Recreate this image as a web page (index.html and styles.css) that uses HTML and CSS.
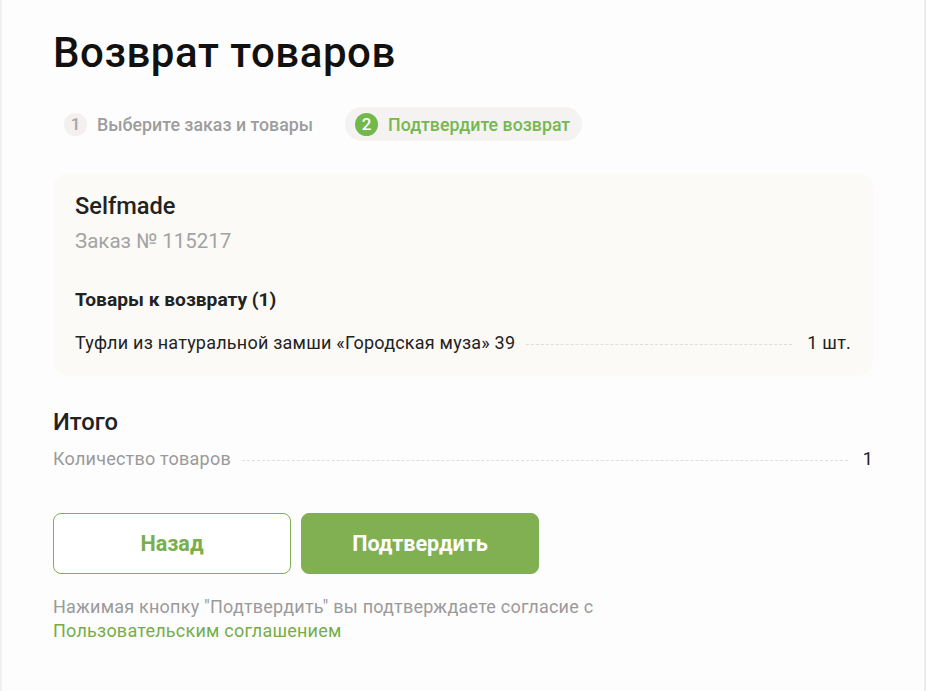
FILE: index.html
```html
<!DOCTYPE html>
<html lang="ru">
<head>
<meta charset="utf-8">
<title>Возврат товаров</title>
<link rel="stylesheet" href="styles.css">
</head>
<body>
<div class="modal">
  <h1 class="title">Возврат товаров</h1>
  <div class="steps">
    <div class="step"><span class="step-num">1</span><span class="step-label">Выберите заказ и товары</span></div>
    <div class="step step-active"><span class="step-num">2</span><span class="step-label">Подтвердите возврат</span></div>
  </div>
  <div class="card">
    <div class="shop">Selfmade</div>
    <div class="order">Заказ № 115217</div>
    <div class="items-title">Товары к возврату (1)</div>
    <div class="row">
      <span class="row-name">Туфли из натуральной замши «Городская муза» 39</span>
      <span class="dots"></span>
      <span class="row-val">1 шт.</span>
    </div>
  </div>
  <div class="total">
    <div class="total-title">Итого</div>
    <div class="row">
      <span class="row-name muted">Количество товаров</span>
      <span class="dots"></span>
      <span class="row-val">1</span>
    </div>
  </div>
  <div class="buttons">
    <button class="btn btn-outline">Назад</button>
    <button class="btn btn-primary">Подтвердить</button>
  </div>
  <p class="note">Нажимая кнопку "Подтвердить" вы подтверждаете согласие с<br><a class="link" href="#">Пользовательским соглашением</a></p>
</div>
</body>
</html>
```
FILE: styles.css
```css
* { box-sizing: border-box; }
html, body { margin: 0; padding: 0; }
body {
  font-family: Roboto, "Noto Sans", sans-serif;
  background: #ffffff;
  color: #222222;
}
.modal {
  width: 926px;
  min-height: 691px;
  background: #fdfdfd;
  border-right: 2px solid #ececec;
  border-left: 2px solid #f1f1f1;
  padding: 25px 51px 40px 51px;
}
.title {
  margin: 0;
  font-size: 42px;
  line-height: 56px;
  font-weight: 500;
  letter-spacing: 0.55px;
  color: #111111;
}
.steps {
  display: flex;
  align-items: center;
  gap: 21px;
  margin-top: 26px;
}
.step {
  display: flex;
  align-items: center;
  gap: 10px;
  height: 34px;
  padding: 0 11px 0 11px;
  border-radius: 17px;
  font-size: 17.8px;
  font-weight: 500;
  color: #9d9d9d;
}
.step-num {
  width: 23px;
  height: 23px;
  border-radius: 50%;
  background: #f4f0f0;
  display: flex;
  align-items: center;
  justify-content: center;
  font-size: 17px;
  font-weight: 500;
  color: #a5a5a5;
}
.step-active {
  padding-left: 10px;
  padding-right: 12px;
  background: #f5f3f2;
  color: #76b84f;
}
.step-active .step-num {
  background: #72b84a;
  color: #ffffff;
}
.card {
  margin-top: 32px;
  background: #fbfaf7;
  border-radius: 16px;
  padding: 18px 22px 20px 22px;
}
.shop {
  font-size: 23.6px;
  line-height: 30px;
  font-weight: 500;
  color: #222222;
}
.order {
  margin-top: 7px;
  font-size: 20.5px;
  line-height: 26px;
  color: #a3a3a3;
}
.items-title {
  margin-top: 33px;
  font-size: 19.2px;
  line-height: 26px;
  font-weight: 700;
  color: #222222;
}
.row {
  display: flex;
  align-items: center;
  margin-top: 17px;
  font-size: 18px;
  line-height: 26px;
  letter-spacing: 0.22px;
  color: #222222;
}
.row-name { white-space: nowrap; }
.muted { color: #9a9a9a; }
.dots {
  flex: 1;
  border-top: 1px dashed #dedede;
  margin: 2px 15px 0 11px;
}
.row-val { white-space: nowrap; }
.total { margin-top: 31px; }
.total-title {
  font-size: 23.8px;
  line-height: 30px;
  font-weight: 500;
  color: #222222;
}
.total .row { margin-top: 9px; }
.buttons {
  display: flex;
  gap: 10px;
  margin-top: 41px;
}
.btn {
  width: 238px;
  height: 61px;
  border-radius: 8px;
  font-family: Roboto, "Noto Sans", sans-serif;
  font-size: 21.6px;
  font-weight: 700;
  cursor: pointer;
}
.btn-outline {
  background: #ffffff;
  border: 1px solid #80b052;
  color: #7aad4c;
}
.btn-primary {
  background: #80b052;
  border: 1px solid #80b052;
  color: #ffffff;
}
.note {
  margin: 21px 0 0 0;
  font-size: 18px;
  line-height: 24px;
  letter-spacing: 0.22px;
  color: #9a9a9a;
}
.link {
  color: #76ad48;
  text-decoration: none;
}
```
